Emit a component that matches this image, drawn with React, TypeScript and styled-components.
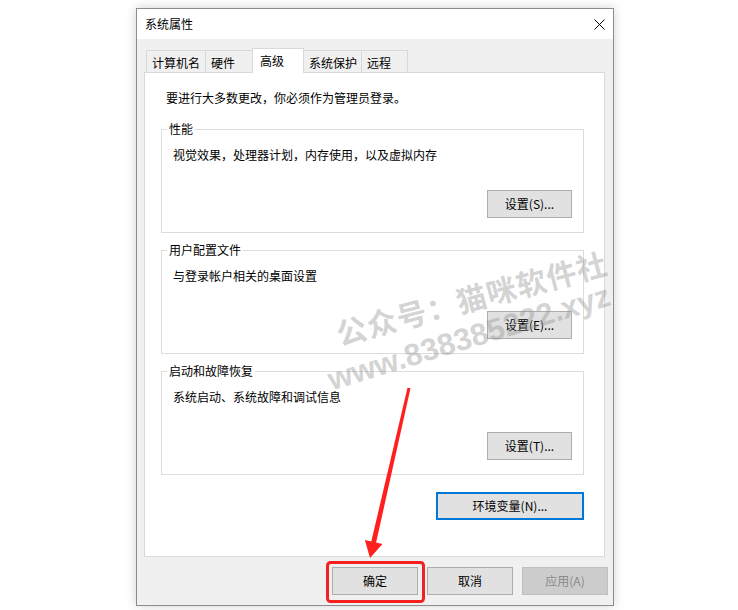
import React from 'react';
import styled, { createGlobalStyle } from 'styled-components';

const GlobalStyle = createGlobalStyle`
  html, body { margin: 0; padding: 0; background: #ffffff; }
  body { font-family: "Noto Sans CJK SC", "Noto Sans", sans-serif; color: #000; }
  * { box-sizing: border-box; }
`;

const Page = styled.div`
  position: relative;
  width: 738px;
  height: 610px;
  padding: 8px 0 0 136px;
  overflow: hidden;
  background: #ffffff;
`;

const Window = styled.div`
  width: 478px;
  height: 598px;
  border: 1px solid #8c8c8c;
  background: #f0f0f0;
  box-shadow: 0 0 10px rgba(0, 0, 0, 0.18);
  display: flex;
  flex-direction: column;
`;

const TitleBar = styled.div`
  flex: none;
  height: 30px;
  background: #ffffff;
  display: flex;
  align-items: center;
  justify-content: space-between;
  padding: 0 8px;
  font-size: 12px;
  line-height: 16px;
`;

const CloseIcon = styled.svg`
  width: 11px;
  height: 11px;
  display: block;
`;

const Body = styled.div`
  flex: 1;
  display: flex;
  flex-direction: column;
  padding: 9px 8px 10px 7px;
`;

const TabStrip = styled.div`
  flex: none;
  height: 24px;
  display: flex;
  align-items: flex-end;
  padding-left: 2px;
`;

const Tab = styled.div<{ $w: number; $active?: boolean }>`
  position: relative;
  z-index: ${(p) => (p.$active ? 1 : 0)};
  width: ${(p) => p.$w}px;
  height: ${(p) => (p.$active ? 25 : 22)}px;
  margin-bottom: ${(p) => (p.$active ? -1 : 0)}px;
  margin-left: -1px;
  border: 1px solid #d9d9d9;
  border-bottom: none;
  background: ${(p) => (p.$active ? '#ffffff' : '#f0f0f0')};
  display: flex;
  align-items: center;
  padding: ${(p) => (p.$active ? '0 0 1px 7px' : '2px 0 0 5px')};
  font-size: 12px;
  line-height: 16px;
  white-space: nowrap;
  &:first-child { margin-left: 0; }
`;

const Panel = styled.div`
  flex: none;
  height: 485px;
  border: 1px solid #d9d9d9;
  background: #ffffff;
  padding: 17px 20px 0 16px;
  display: flex;
  flex-direction: column;
`;

const Intro = styled.div`
  font-size: 12px;
  line-height: 16px;
  margin-left: 5px;
`;

const Group = styled.fieldset`
  margin: 15px 0 0 0;
  padding: 0 11px 14px 11px;
  border: 1px solid #dcdcdc;
  min-inline-size: auto;
  & + & { margin-top: 9px; }
`;

const Legend = styled.legend`
  padding: 0 2px;
  margin-left: -6px;
  font-size: 12px;
  line-height: 16px;
`;

const Desc = styled.div`
  margin-top: 10px;
  font-size: 12px;
  line-height: 16px;
`;

const Actions = styled.div<{ $mt: number }>`
  display: flex;
  justify-content: flex-end;
  margin-top: ${(p) => p.$mt}px;
`;

const Button = styled.button<{ $w: number; $focus?: boolean }>`
  width: ${(p) => p.$w}px;
  height: 28px;
  padding: 0;
  margin: 0;
  font-family: "Noto Sans CJK SC", "Noto Sans", sans-serif;
  font-size: 12px;
  line-height: 16px;
  color: #000;
  background: #e1e1e1;
  border: ${(p) => (p.$focus ? '2px solid #0078d7' : '1px solid #adadad')};
  border-radius: 0;
  &:disabled {
    background: #cccccc;
    border-color: #bfbfbf;
    color: #8a8a8a;
  }
`;

const ButtonRow = styled.div`
  flex: none;
  display: flex;
  justify-content: flex-end;
  gap: 9px;
  margin: 10px -3px 0 0;
`;

const Watermark = styled.div`
  position: absolute;
  left: 331px;
  top: 312px;
  transform: rotate(-15deg);
  transform-origin: 0 0;
  color: rgba(150, 150, 150, 0.42);
  font-weight: 700;
  font-size: 30px;
  line-height: 44px;
  white-space: nowrap;
  pointer-events: none;
`;

const WmLine = styled.div<{ $latin?: boolean; $shift: number }>`
  font-family: ${(p) =>
    p.$latin ? '"Liberation Sans", Arial, sans-serif' : '"Noto Sans CJK SC", sans-serif'};
  font-size: ${(p) => (p.$latin ? 31 : 30)}px;
  letter-spacing: ${(p) => (p.$latin ? 0 : 1)}px;
  margin-left: ${(p) => p.$shift}px;
  transform-origin: 0 50%;
  transform: rotate(${(p) => (p.$latin ? -2 : 0)}deg);
`;

const Annotation = styled.svg`
  position: absolute;
  left: 0;
  top: 0;
  width: 738px;
  height: 610px;
  pointer-events: none;
`;

const tabs = [
  { label: '计算机名', w: 60 },
  { label: '硬件', w: 48 },
  { label: '高级', w: 52, active: true },
  { label: '系统保护', w: 59 },
  { label: '远程', w: 47 },
];

const groups = [
  { title: '性能', desc: '视觉效果，处理器计划，内存使用，以及虚拟内存', btn: '设置(S)...' },
  { title: '用户配置文件', desc: '与登录帐户相关的桌面设置', btn: '设置(E)...' },
  { title: '启动和故障恢复', desc: '系统启动、系统故障和调试信息', btn: '设置(T)...' },
];

export default function App() {
  return (
    <>
      <GlobalStyle />
      <Page>
        <Window>
          <TitleBar>
            <span>系统属性</span>
            <CloseIcon viewBox="0 0 11 11">
              <path d="M0.5 0.5 L10.5 10.5 M10.5 0.5 L0.5 10.5" stroke="#000" strokeWidth="1" fill="none" />
            </CloseIcon>
          </TitleBar>
          <Body>
            <TabStrip>
              {tabs.map((t) => (
                <Tab key={t.label} $w={t.w} $active={t.active}>
                  {t.label}
                </Tab>
              ))}
            </TabStrip>
            <Panel>
              <Intro>要进行大多数更改，你必须作为管理员登录。</Intro>
              {groups.map((g) => (
                <Group key={g.title}>
                  <Legend>{g.title}</Legend>
                  <Desc>{g.desc}</Desc>
                  <Actions $mt={27}>
                    <Button $w={85}>{g.btn}</Button>
                  </Actions>
                </Group>
              ))}
              <Actions $mt={17}>
                <Button $w={148} $focus>
                  环境变量(N)...
                </Button>
              </Actions>
            </Panel>
            <ButtonRow>
              <Button $w={86}>确定</Button>
              <Button $w={86}>取消</Button>
              <Button $w={86} disabled>
                应用(A)
              </Button>
            </ButtonRow>
          </Body>
        </Window>
        <Watermark>
          <WmLine $shift={0}>公众号：猫咪软件社</WmLine>
          <WmLine $latin $shift={-20}>www.838385222.xyz</WmLine>
        </Watermark>
        <Annotation viewBox="0 0 738 610">
          <polygon
            points="410.5,388.3 376.1,542.6 382.5,544 370,558 364.9,540 371.3,541.4 407.5,387.7"
            fill="#ff1f1f"
          />
          <rect x="327.5" y="562.5" width="96" height="39" rx="3" ry="3" fill="none" stroke="#f52020" strokeWidth="3" />
        </Annotation>
      </Page>
    </>
  );
}
